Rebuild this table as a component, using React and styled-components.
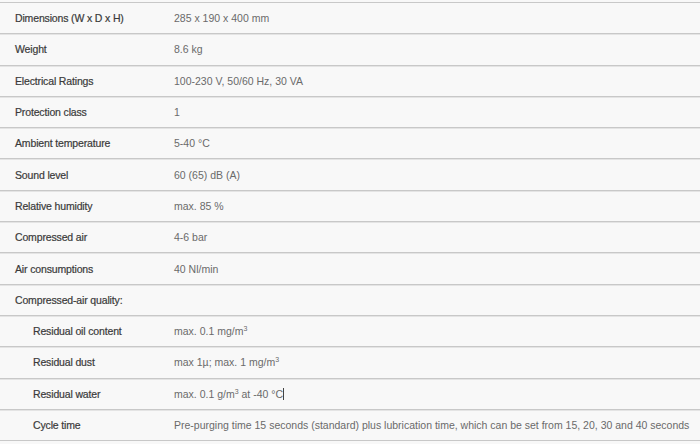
import React from 'react'
import styled, { createGlobalStyle } from 'styled-components'

const GlobalStyle = createGlobalStyle`
  html, body {
    margin: 0;
    padding: 0;
    background: #f8f8f8;
  }
`

const rows = [
  { label: 'Dimensions (W x D x H)', value: '285 x 190 x 400 mm' },
  { label: 'Weight', value: '8.6 kg' },
  { label: 'Electrical Ratings', value: '100-230 V, 50/60 Hz, 30 VA' },
  { label: 'Protection class', value: '1' },
  { label: 'Ambient temperature', value: '5-40 °C' },
  { label: 'Sound level', value: '60 (65) dB (A)' },
  { label: 'Relative humidity', value: 'max. 85 %' },
  { label: 'Compressed air', value: '4-6 bar' },
  { label: 'Air consumptions', value: '40 Nl/min' },
  { label: 'Compressed-air quality:', value: '' },
  { label: 'Residual oil content', value: <>max. 0.1 mg/m<sup>3</sup></>, sub: true },
  { label: 'Residual dust', value: <>max 1µ; max. 1 mg/m<sup>3</sup></>, sub: true },
  { label: 'Residual water', value: <>max. 0.1 g/m<sup>3</sup> at -40 °C<Caret /></>, sub: true },
  {
    label: 'Cycle time',
    value: 'Pre-purging time 15 seconds (standard) plus lubrication time, which can be set from 15, 20, 30 and 40 seconds',
    sub: true,
  },
]

function Caret() {
  return <CaretMark />
}

export default function App() {
  return (
    <>
      <GlobalStyle />
      <Table>
        {rows.map((r, i) => (
          <Row key={i}>
            <Label $sub={r.sub}>{r.label}</Label>
            <Value>{r.value}</Value>
          </Row>
        ))}
      </Table>
    </>
  )
}

const Table = styled.div`
  margin-top: 2px;
  border-top: 1px solid #c8c8c8;
  font-family: "Liberation Sans", Arial, sans-serif;
  font-size: 10.5px;
`

const Row = styled.div`
  display: grid;
  grid-template-columns: 174px 1fr;
  align-items: center;
  height: 31.3px;
  box-sizing: border-box;
  border-bottom: 1px solid #c8c8c8;
  box-shadow: 0 1px 0 #e4e4e4;
`

const Label = styled.div`
  padding-left: ${(p) => (p.$sub ? '33px' : '15px')};
  color: #3a3a3a;
  letter-spacing: -0.15px;
  -webkit-text-stroke: 0.2px #3a3a3a;
`

const Value = styled.div`
  color: #6a6a6a;
  white-space: nowrap;

  sup {
    font-size: 7px;
    vertical-align: 4px;
    line-height: 0;
  }
`

const CaretMark = styled.span`
  display: inline-block;
  width: 1px;
  height: 12px;
  background: #444;
  vertical-align: -2px;
`
